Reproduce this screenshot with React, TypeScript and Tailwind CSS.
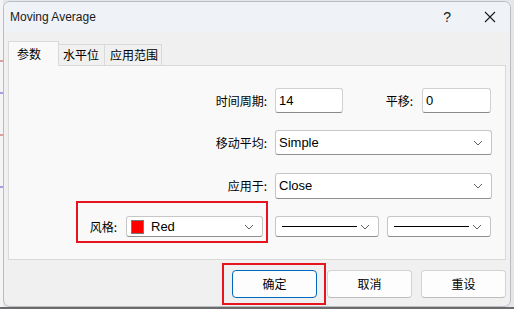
import React from 'react'

const cjk = { fontFamily: '"Noto Sans CJK SC", "Liberation Sans", sans-serif' }
const latin = { fontFamily: '"Liberation Sans", "Noto Sans CJK SC", sans-serif' }

function Chevron() {
  return (
    <svg width="10" height="6" viewBox="0 0 10 6" className="shrink-0">
      <path d="M1 1 L5 5 L9 1" fill="none" stroke="#5f5f5f" strokeWidth="1" />
    </svg>
  )
}

function Field({ value, className = '' }: { value: string; className?: string }) {
  return (
    <div
      className={`h-[25px] flex items-center pl-[3px] bg-white border border-[#d0d0d0] border-b-[#8a8a8a] rounded-[3px] text-[13px] text-black ${className}`}
      style={latin}
    >
      {value}
    </div>
  )
}

function Select({ children, className = '' }: { children: React.ReactNode; className?: string }) {
  return (
    <div
      className={`flex items-center justify-between pl-[3px] pr-[8px] bg-white border border-[#c6c6c6] border-b-[#8f8f8f] rounded-[3px] text-[13px] text-black ${className}`}
      style={latin}
    >
      <div className="flex items-center flex-1 min-w-0">{children}</div>
      <Chevron />
    </div>
  )
}

function Label({ text, className = '' }: { text: string; className?: string }) {
  return (
    <div className={`text-right text-[12px] text-black shrink-0 ${className}`} style={cjk}>
      {text}
    </div>
  )
}

function Button({ text, primary }: { text: string; primary?: boolean }) {
  return (
    <div
      className={`w-[85px] h-[28px] flex items-center justify-center rounded-[4px] bg-[#fdfdfd] text-[12px] text-black ${
        primary ? 'border border-[#0067c0]' : 'border border-[#d3d3d3] border-b-[#bdbdbd]'
      }`}
      style={cjk}
    >
      {text}
    </div>
  )
}

export default function App() {
  return (
    <div className="w-[514px] h-[309px] bg-[#e4e6ea] pl-[3px] pr-[3px] pt-[1px] pb-[2px] relative overflow-hidden">
      <div className="absolute left-0 top-0 w-[3px] h-full bg-[#f4f4f6]">
        <div className="h-[60px]" />
        <div className="h-[2px] bg-[#d9a0a0]" />
        <div className="h-[30px]" />
        <div className="h-[2px] bg-[#a0a0e0]" />
        <div className="h-[40px]" />
        <div className="h-[2px] bg-[#d9a0a0]" />
        <div className="h-[50px]" />
        <div className="h-[2px] bg-[#a0a0e0]" />
      </div>
      <div className="absolute left-0 bottom-0 w-full h-[2px] bg-[#6b6b6b]" />

      <div className="h-full flex flex-col bg-[#f0f0f0] border border-[#b9bcc0] rounded-[7px] overflow-hidden">
        {/* title bar */}
        <div className="h-[30px] shrink-0 flex items-center bg-[#eff3f8] pl-[6px]">
          <span className="text-[12px] text-[#1a1a1a]" style={latin}>
            Moving Average
          </span>
          <div className="flex-1" />
          <span className="text-[14px] text-[#1a1a1a] mr-[33px]" style={latin}>
            ?
          </span>
          <svg width="12" height="12" viewBox="0 0 12 12" className="mr-[14px]">
            <path d="M1 1 L11 11 M11 1 L1 11" stroke="#1a1a1a" strokeWidth="1.1" />
          </svg>
        </div>

        {/* tabs */}
        <div className="flex items-end mt-[8px] px-[4px] h-[25px] shrink-0">
          <div
            className="w-[51px] h-[25px] mb-[-1px] relative z-10 bg-[#f9f9f9] border border-[#d9d9d9] border-b-0 pl-[8px] pt-[3px] text-[12px] text-black"
            style={cjk}
          >
            参数
          </div>
          <div
            className="w-[46px] h-[21px] bg-[#f0f0f0] border-t border-r border-[#d9d9d9] flex items-center pl-[4px] text-[12px] text-black"
            style={cjk}
          >
            水平位
          </div>
          <div
            className="w-[57px] h-[21px] bg-[#f0f0f0] border-t border-r border-[#d9d9d9] flex items-center pl-[5px] text-[12px] text-black"
            style={cjk}
          >
            应用范围
          </div>
        </div>

        {/* panel */}
        <div className="mx-[4px] h-[195px] shrink-0 bg-[#f9f9f9] border border-[#d9d9d9] pt-[22px]">
          <div className="flex items-center h-[25px]">
            <Label text="时间周期:" className="w-[258px]" />
            <Field value="14" className="ml-[8px] w-[68px]" />
            <Label text="平移:" className="w-[70px]" />
            <Field value="0" className="ml-[9px] w-[69px]" />
          </div>
          <div className="flex items-center h-[25px] mt-[17px]">
            <Label text="移动平均:" className="w-[258px]" />
            <Select className="ml-[8px] w-[217px] h-[25px]">Simple</Select>
          </div>
          <div className="flex items-center h-[26px] mt-[18px]">
            <Label text="应用于:" className="w-[258px]" />
            <Select className="ml-[8px] w-[217px] h-[26px]">Close</Select>
          </div>
          <div className="flex items-center h-[21px] mt-[17px]">
            <Label text="风格:" className="w-[108px]" />
            <Select className="ml-[9px] w-[137px] h-[21px]">
              <span className="w-[13px] h-[14px] bg-[#ff0000] border border-[#7a7a7a] ml-[1px] shrink-0" />
              <span className="ml-[7px]">Red</span>
            </Select>
            <Select className="ml-[12px] w-[104px] h-[21px]">
              <span className="ml-[3px] w-[75px] h-[1px] bg-black" />
            </Select>
            <Select className="ml-[8px] w-[104px] h-[21px]">
              <span className="ml-[3px] w-[75px] h-[1px] bg-black" />
            </Select>
          </div>
        </div>

        {/* buttons */}
        <div className="flex justify-end gap-[9px] pr-[4px] pt-[10px]">
          <div className="mr-[1px]">
            <Button text="确定" primary />
          </div>
          <Button text="取消" />
          <Button text="重设" />
        </div>
      </div>

      {/* red annotation boxes */}
      <div className="absolute left-[76px] top-[201px] w-[192px] h-[42px] border-2 border-[#e5141f] pointer-events-none" />
      <div className="absolute left-[222px] top-[263px] w-[104px] h-[42px] border-2 border-[#e5141f] pointer-events-none" />
    </div>
  )
}
